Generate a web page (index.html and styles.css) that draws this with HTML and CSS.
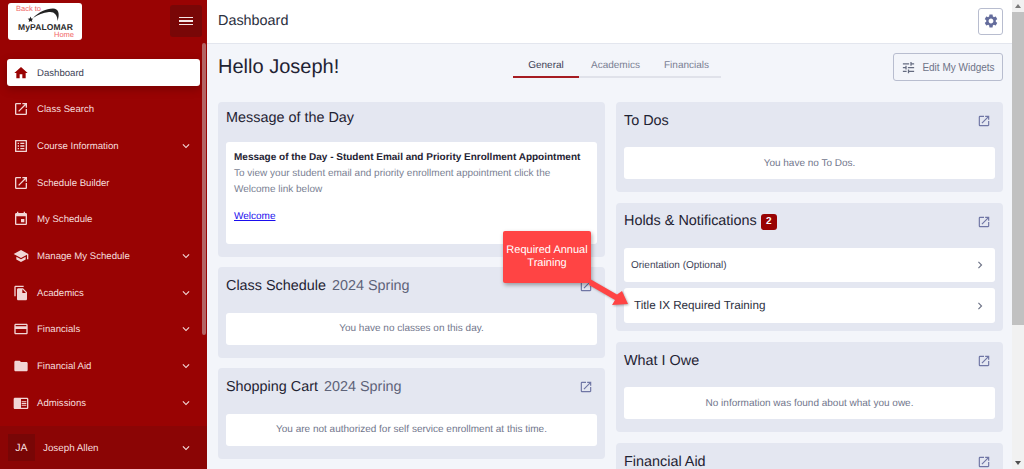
FILE: index.html
```html
<!DOCTYPE html>
<html lang="en">
<head>
<meta charset="utf-8">
<title>Dashboard</title>
<link rel="stylesheet" href="styles.css">
</head>
<body>
<svg class="defs" width="0" height="0" aria-hidden="true">
  <symbol id="i-home" viewBox="0 0 24 24"><path d="M10 20v-6h4v6h5v-8h3L12 3 2 12h3v8z"/></symbol>
  <symbol id="i-launch" viewBox="0 0 24 24"><path d="M19 19H5V5h7V3H5a2 2 0 0 0-2 2v14a2 2 0 0 0 2 2h14c1.100 0 2-.9 2-2v-7h-2v7zM14 3v2h3.590l-9.830 9.830 1.410 1.410L19 6.410V10h2V3h-7z"/></symbol>
  <symbol id="i-list" viewBox="0 0 24 24"><path d="M19 5v14H5V5h14m1.100-2H3.900c-.5 0-.9.4-.9.9v16.200c0 .4.4.9.9.9h16.200c.4 0 .9-.5.9-.9V3.900c0-.5-.5-.9-.9-.9zM11 7h6v2h-6V7zm0 4h6v2h-6v-2zm0 4h6v2h-6zM7 7h2v2H7zm0 4h2v2H7zm0 4h2v2H7z"/></symbol>
  <symbol id="i-event" viewBox="0 0 24 24"><path d="M17 12h-5v5h5v-5zM16 1v2H8V1H6v2H5c-1.110 0-1.990.9-1.990 2L3 19c0 1.100.89 2 2 2h14c1.100 0 2-.9 2-2V5c0-1.100-.9-2-2-2h-1V1h-2zm3 18H5V8h14v11z"/></symbol>
  <symbol id="i-school" viewBox="0 0 24 24"><path d="M5 13.180v4L12 21l7-3.820v-4L12 17l-7-3.820zM12 3L1 9l11 6 9-4.910V17h2V9L12 3z"/></symbol>
  <symbol id="i-copy" viewBox="0 0 24 24"><path d="M16 1H4c-1.100 0-2 .9-2 2v14h2V3h12V1zm-1 4l6 6v10c0 1.100-.9 2-2 2H7.990C6.890 23 6 22.100 6 21l.01-14c0-1.100.89-2 1.990-2h7zm-1 7h5.500L14 6.500V12z"/></symbol>
  <symbol id="i-card" viewBox="0 0 24 24"><path d="M20 4H4c-1.110 0-1.990.89-1.990 2L2 18c0 1.110.89 2 2 2h16c1.110 0 2-.89 2-2V6c0-1.110-.89-2-2-2zm0 14H4v-6h16v6zm0-10H4V6h16v2z"/></symbol>
  <symbol id="i-folder" viewBox="0 0 24 24"><path d="M10 4H4c-1.100 0-1.990.9-1.990 2L2 18c0 1.100.9 2 2 2h16c1.100 0 2-.9 2-2V8c0-1.100-.9-2-2-2h-8l-2-2z"/></symbol>
  <symbol id="i-reader" viewBox="0 0 24 24"><path d="M21 4H3c-1.100 0-2 .9-2 2v13c0 1.100.9 2 2 2h18c1.100 0 2-.9 2-2V6c0-1.100-.9-2-2-2zm0 15h-9V6h9v13zm-8-9.500h7V11h-7zm0 2.500h7v1.500h-7zm0 2.500h7V16h-7z"/></symbol>
  <symbol id="i-gear" viewBox="0 0 24 24"><path d="M19.140 12.940c.04-.3.06-.61.06-.94 0-.32-.02-.64-.07-.94l2.030-1.580c.18-.14.23-.41.12-.61l-1.920-3.320c-.12-.22-.37-.29-.59-.22l-2.390.96c-.5-.38-1.030-.7-1.620-.94l-.36-2.540c-.04-.24-.24-.41-.48-.41h-3.840c-.24 0-.43.17-.47.41l-.36 2.540c-.59.24-1.130.57-1.620.94l-2.390-.96c-.22-.08-.47 0-.59.22L2.740 8.870c-.12.21-.08.47.12.61l2.030 1.580c-.05.3-.09.63-.09.94s.02.64.07.94l-2.030 1.580c-.18.14-.23.41-.12.61l1.920 3.320c.12.22.37.29.59.22l2.390-.96c.5.38 1.030.7 1.620.94l.36 2.540c.05.24.24.41.48.41h3.840c.24 0 .44-.17.47-.41l.36-2.540c.59-.24 1.130-.56 1.620-.94l2.390.96c.22.08.47 0 .59-.22l1.920-3.320c.12-.22.07-.47-.12-.61l-2.010-1.580zM12 15.600c-1.980 0-3.600-1.620-3.600-3.600s1.620-3.600 3.600-3.600 3.600 1.620 3.600 3.600-1.620 3.600-3.600 3.600z"/></symbol>
  <symbol id="i-tune" viewBox="0 0 24 24"><path d="M3 17v2h6v-2H3zM3 5v2h10V5H3zm10 16v-2h8v-2h-8v-2h-2v6h2zM7 9v2H3v2h4v2h2V9H7zm14 4v-2H11v2h10zm-6-4h2V7h4V5h-4V3h-2v6z"/></symbol>
  <symbol id="i-down" viewBox="0 0 24 24"><path d="M16.590 8.590L12 13.170 7.410 8.590 6 10l6 6 6-6z"/></symbol>
  <symbol id="i-right" viewBox="0 0 24 24"><path d="M10 6L8.590 7.410 13.170 12l-4.580 4.590L10 18l6-6z"/></symbol>
</svg>

<div class="app">
  <aside class="sidebar">
    <div class="side-top">
      <a class="logo">
        <span class="logo-back">Back to</span>
        <svg class="logo-swoosh" viewBox="0 0 74 37"><path d="M25 15C31 9 38 5.500 45 5.500c5.500 0 7 5 4.500 12.500C49.500 12 46.500 8.500 41 9 35 9.500 30 12 25 15z"/><path d="M22.500 13.500l.8 2 2 .3-1.500 1.300.5 2-1.800-1.100-1.800 1.100.5-2-1.500-1.300 2-.3z"/></svg>
        <span class="logo-name">MyPALOMAR</span>
        <span class="logo-home">Home</span>
      </a>
      <button class="burger" aria-label="Menu"><span></span><span></span><span></span></button>
    </div>
    <nav class="nav">
      <a class="nav-item active"><svg class="nav-icon"><use href="#i-home"/></svg><span class="nav-label">Dashboard</span></a>
      <a class="nav-item"><svg class="nav-icon"><use href="#i-launch"/></svg><span class="nav-label">Class Search</span></a>
      <a class="nav-item"><svg class="nav-icon"><use href="#i-list"/></svg><span class="nav-label">Course Information</span><svg class="nav-chev"><use href="#i-down"/></svg></a>
      <a class="nav-item"><svg class="nav-icon"><use href="#i-launch"/></svg><span class="nav-label">Schedule Builder</span></a>
      <a class="nav-item"><svg class="nav-icon"><use href="#i-event"/></svg><span class="nav-label">My Schedule</span></a>
      <a class="nav-item"><svg class="nav-icon"><use href="#i-school"/></svg><span class="nav-label">Manage My Schedule</span><svg class="nav-chev"><use href="#i-down"/></svg></a>
      <a class="nav-item"><svg class="nav-icon"><use href="#i-copy"/></svg><span class="nav-label">Academics</span><svg class="nav-chev"><use href="#i-down"/></svg></a>
      <a class="nav-item"><svg class="nav-icon"><use href="#i-card"/></svg><span class="nav-label">Financials</span><svg class="nav-chev"><use href="#i-down"/></svg></a>
      <a class="nav-item"><svg class="nav-icon"><use href="#i-folder"/></svg><span class="nav-label">Financial Aid</span><svg class="nav-chev"><use href="#i-down"/></svg></a>
      <a class="nav-item"><svg class="nav-icon"><use href="#i-reader"/></svg><span class="nav-label">Admissions</span><svg class="nav-chev"><use href="#i-down"/></svg></a>
      <div class="side-thumb"></div>
    </nav>
    <div class="user">
      <span class="avatar">JA</span>
      <span class="user-name">Joseph Allen</span>
      <svg class="user-chev"><use href="#i-down"/></svg>
    </div>
  </aside>

  <div class="main">
    <header class="topbar">
      <h1 class="page-title">Dashboard</h1>
      <button class="gear" aria-label="Settings"><svg class="gear-icon"><use href="#i-gear"/></svg></button>
    </header>
    <div class="content">
      <div class="hello-row">
        <h2 class="hello">Hello Joseph!</h2>
        <div class="tabs">
          <a class="tab current">General</a>
          <a class="tab">Academics</a>
          <a class="tab">Financials</a>
        </div>
        <button class="edit"><svg class="edit-icon"><use href="#i-tune"/></svg>Edit My Widgets</button>
      </div>
      <div class="columns">
        <div class="col">
          <section class="card">
            <div class="card-head card-head-short"><h3 class="card-title">Message of the Day</h3></div>
            <div class="panel motd">
              <div class="motd-title">Message of the Day - Student Email and Priority Enrollment Appointment</div>
              <p class="motd-text">To view your student email and priority enrollment appointment click the Welcome link below</p>
              <a class="motd-link">Welcome</a>
            </div>
          </section>
          <section class="card">
            <div class="card-head"><h3 class="card-title">Class Schedule <span class="term">2024 Spring</span></h3><svg class="card-link"><use href="#i-launch"/></svg></div>
            <div class="panel empty">You have no classes on this day.</div>
          </section>
          <section class="card">
            <div class="card-head"><h3 class="card-title">Shopping Cart <span class="term">2024 Spring</span></h3><svg class="card-link"><use href="#i-launch"/></svg></div>
            <div class="panel empty">You are not authorized for self service enrollment at this time.</div>
          </section>
        </div>
        <div class="col">
          <section class="card">
            <div class="card-head"><h3 class="card-title">To Dos</h3><svg class="card-link"><use href="#i-launch"/></svg></div>
            <div class="panel empty">You have no To Dos.</div>
          </section>
          <section class="card">
            <div class="card-head"><h3 class="card-title">Holds &amp; Notifications <span class="badge">2</span></h3><svg class="card-link"><use href="#i-launch"/></svg></div>
            <div class="rows">
              <a class="panel row"><span>Orientation (Optional)</span><svg class="row-chev"><use href="#i-right"/></svg></a>
              <a class="panel row row-big"><span>Title IX Required Training</span><svg class="row-chev"><use href="#i-right"/></svg></a>
            </div>
          </section>
          <section class="card">
            <div class="card-head"><h3 class="card-title">What I Owe</h3><svg class="card-link"><use href="#i-launch"/></svg></div>
            <div class="panel empty">No information was found about what you owe.</div>
          </section>
          <section class="card">
            <div class="card-head"><h3 class="card-title">Financial Aid</h3><svg class="card-link"><use href="#i-launch"/></svg></div>
          </section>
        </div>
      </div>
      <div class="callout">Required Annual Training</div>
      <svg class="callout-arrow" viewBox="0 0 42 30"><path d="M2 1L29 16.500 34 13 40 26 24 27 27 22 1 7z"/></svg>
    </div>
  </div>

  <div class="pagebar">
    <span class="arrow-up"></span>
    <div class="pagebar-track"><div class="pagebar-thumb"></div></div>
    <span class="arrow-down"></span>
  </div>
</div>
</body>
</html>
```
FILE: styles.css
```css
* { box-sizing: border-box; }
html, body { margin: 0; height: 100%; overflow: hidden; }
body { font-family: "Liberation Sans", Arial, sans-serif; color: #1f2333; text-rendering: geometricPrecision; }
h1, h2, h3, p { margin: 0; font-weight: 400; }
button { font-family: inherit; padding: 0; cursor: pointer; }
.defs { position: absolute; }

.app { display: flex; height: 469px; }

/* Sidebar */
.sidebar { width: 207px; flex: none; background: #990303; display: flex; flex-direction: column; }
.side-top { height: 43px; flex: none; display: flex; align-items: flex-start; justify-content: space-between; padding: 3px 5px 0 8px; }
.logo { position: relative; display: block; width: 74px; height: 37px; background: #fff; border-radius: 3px; }
.logo-back { position: absolute; left: 8px; top: 1px; font-size: 7.500px; line-height: 10px; color: #f26666; }
.logo-home { position: absolute; right: 8px; top: 27px; font-size: 7.500px; line-height: 10px; color: #f26666; }
.logo-name { position: absolute; left: 10px; top: 19px; font-size: 8.500px; line-height: 10px; font-weight: 700; letter-spacing: .1px; color: #2b2b2b; white-space: nowrap; }
.logo-swoosh { position: absolute; inset: 0; width: 74px; height: 37px; fill: #222; }
.burger { width: 32px; height: 32px; margin-top: 2px; background: #790707; border: 0; border-radius: 3px; display: flex; flex-direction: column; align-items: center; justify-content: center; gap: 2px; }
.burger span { display: block; width: 14px; height: 1.500px; background: #f5e6e6; }

.nav { position: relative; flex: 1; min-height: 0; padding: 16px 7px 0; display: flex; flex-direction: column; gap: 9.700px; }
.nav-item { height: 27px; flex: none; display: flex; align-items: center; padding: 0 7px 0 6px; color: #f6dede; font-size: 9.600px; border-radius: 3px; }
.nav-item.active { background: #fff; color: #3d4256; box-shadow: 0 3px 8px rgba(60,0,0,.35); }
.nav-icon { width: 16px; height: 16px; flex: none; fill: #f2d6d6; margin-right: 8px; }
.active .nav-icon { fill: #990303; }
.nav-label { flex: 1; white-space: nowrap; padding-top: 1px; }
.nav-chev { width: 14px; height: 14px; flex: none; fill: #f2d6d6; }
.side-thumb { position: absolute; right: 1px; top: 0; width: 4px; height: 292px; background: #b36464; border-radius: 2px; }

.user { height: 43px; flex: none; background: #8b0505; display: flex; align-items: center; padding: 0 14px 0 8px; color: #f6dede; font-size: 9.600px; }
.avatar { width: 27px; height: 27px; background: #780606; display: flex; align-items: center; justify-content: center; margin-right: 8px; font-size: 10.500px; }
.user-name { flex: 1; font-size: 9.800px; padding-top: 1px; }
.user-chev { width: 14px; height: 14px; fill: #f6dede; }

/* Main */
.main { flex: 1; min-width: 0; display: flex; flex-direction: column; background: #f3f5fa; }
.topbar { height: 44px; flex: none; background: #fff; border-bottom: 1px solid #e3e6ee; display: flex; align-items: center; justify-content: space-between; padding: 0 9px 1px 11px; }
.page-title { font-size: 14.400px; color: #2c3040; }
.gear { width: 25px; height: 27px; background: #fff; border: 1px solid #b8bdcf; border-radius: 3px; display: flex; align-items: center; justify-content: center; }
.gear-icon { width: 16px; height: 16px; fill: #646c9c; }

.content { position: relative; flex: 1; min-height: 0; overflow: hidden; padding: 0 9px 0 11px; }
.hello-row { height: 57.500px; display: flex; align-items: flex-start; }
.hello { width: 295px; font-size: 20px; line-height: 23px; margin-top: 11.500px; color: #1f2333; }
.tabs { display: flex; margin-top: 9px; width: 208px; height: 25px; border-bottom: 2px solid #e0e2ea; }
.tab { height: 25px; padding: 7px 0 0; font-size: 10px; line-height: 12px; color: #7a7f93; }
.tab:nth-child(1) { width: 66px; text-align: center; color: #3d4256; }
.tab:nth-child(2) { width: 72px; padding-left: 12px; }
.tab:nth-child(3) { width: 70px; padding-left: 13px; }
.tab.current { border-bottom: 2px solid #a61c22; }
.edit { margin-left: auto; margin-top: 9px; width: 110px; height: 28px; background: #f3f5fa; border: 1px solid #b8bdcf; border-radius: 3px; display: flex; align-items: center; justify-content: center; gap: 6px; font-size: 10px; color: #6e7387; }
.edit-icon { width: 15px; height: 15px; fill: #646b80; }

.columns { display: grid; grid-template-columns: 387px 387px; gap: 11px; }
.col { display: flex; flex-direction: column; gap: 10.500px; }
.card { background: #e4e7f1; border-radius: 4px; padding: 0 8px 8px; }
.card-head { height: 45.500px; display: flex; align-items: center; justify-content: space-between; padding: 0 4px 7px 0; }
.card-head-short { height: 40.500px; padding-bottom: 8px; }
.card-title { font-size: 14.400px; color: #1f2333; white-space: nowrap; }
.term { color: #5e6379; margin-left: 2px; }
.card-link { width: 14px; height: 14px; fill: #6f76a5; flex: none; }
.badge { display: inline-block; min-width: 16px; height: 16px; line-height: 16px; text-align: center; background: #990303; color: #fff; border-radius: 3px; font-size: 10px; font-weight: 700; vertical-align: 1px; }
.panel { background: #fff; border-radius: 3px; }
.empty { height: 32px; margin-bottom: 5px; display: flex; align-items: center; justify-content: center; font-size: 10px; color: #71768c; }

.motd { height: 101.500px; margin-bottom: 5px; padding: 9px 8px; font-size: 10px; }
.motd-title { font-weight: 700; line-height: 14px; color: #1f2333; white-space: nowrap; font-size: 10px; }
.motd-text { line-height: 16px; color: #7a7f93; margin-top: 1px; width: 340px; }
.motd-link { display: block; margin-top: 11px; line-height: 16px; color: #1a0dee; text-decoration: underline; }

.rows { display: flex; flex-direction: column; gap: 6px; }
.row { height: 34px; display: flex; align-items: center; justify-content: space-between; padding: 0 8px 0 7px; font-size: 10px; color: #3d4256; }
.row-big { height: 35px; padding-left: 10px; font-size: 11.700px; color: #2c3040; }
.row-chev { width: 14px; height: 14px; fill: #6e7387; }

/* Annotation lying over the cards */
.callout { position: absolute; left: 296px; top: 187px; width: 88px; height: 52px; background: #ff4444; border-radius: 2px; box-shadow: 1px 2px 4px rgba(0,0,0,.35); color: #fff; font-size: 11px; line-height: 13px; text-align: center; padding: 13px 0 0; }
.callout-arrow { position: absolute; left: 381px; top: 234px; width: 42px; height: 30px; fill: #ff4444; filter: drop-shadow(1px 1px 1px rgba(0,0,0,.3)); }

/* Window scrollbar */
.pagebar { width: 12px; flex: none; background: #f1f1f1; display: flex; flex-direction: column; align-items: center; }
.pagebar-track { flex: 1; width: 100%; }
.pagebar-thumb { width: 100%; height: 313px; background: #c1c1c1; }
.arrow-up, .arrow-down { display: block; width: 0; height: 0; margin: 4px 0; border-left: 3px solid transparent; border-right: 3px solid transparent; }
.arrow-up { border-bottom: 4px solid #7a7a7a; }
.arrow-down { border-top: 4px solid #505050; }
```
